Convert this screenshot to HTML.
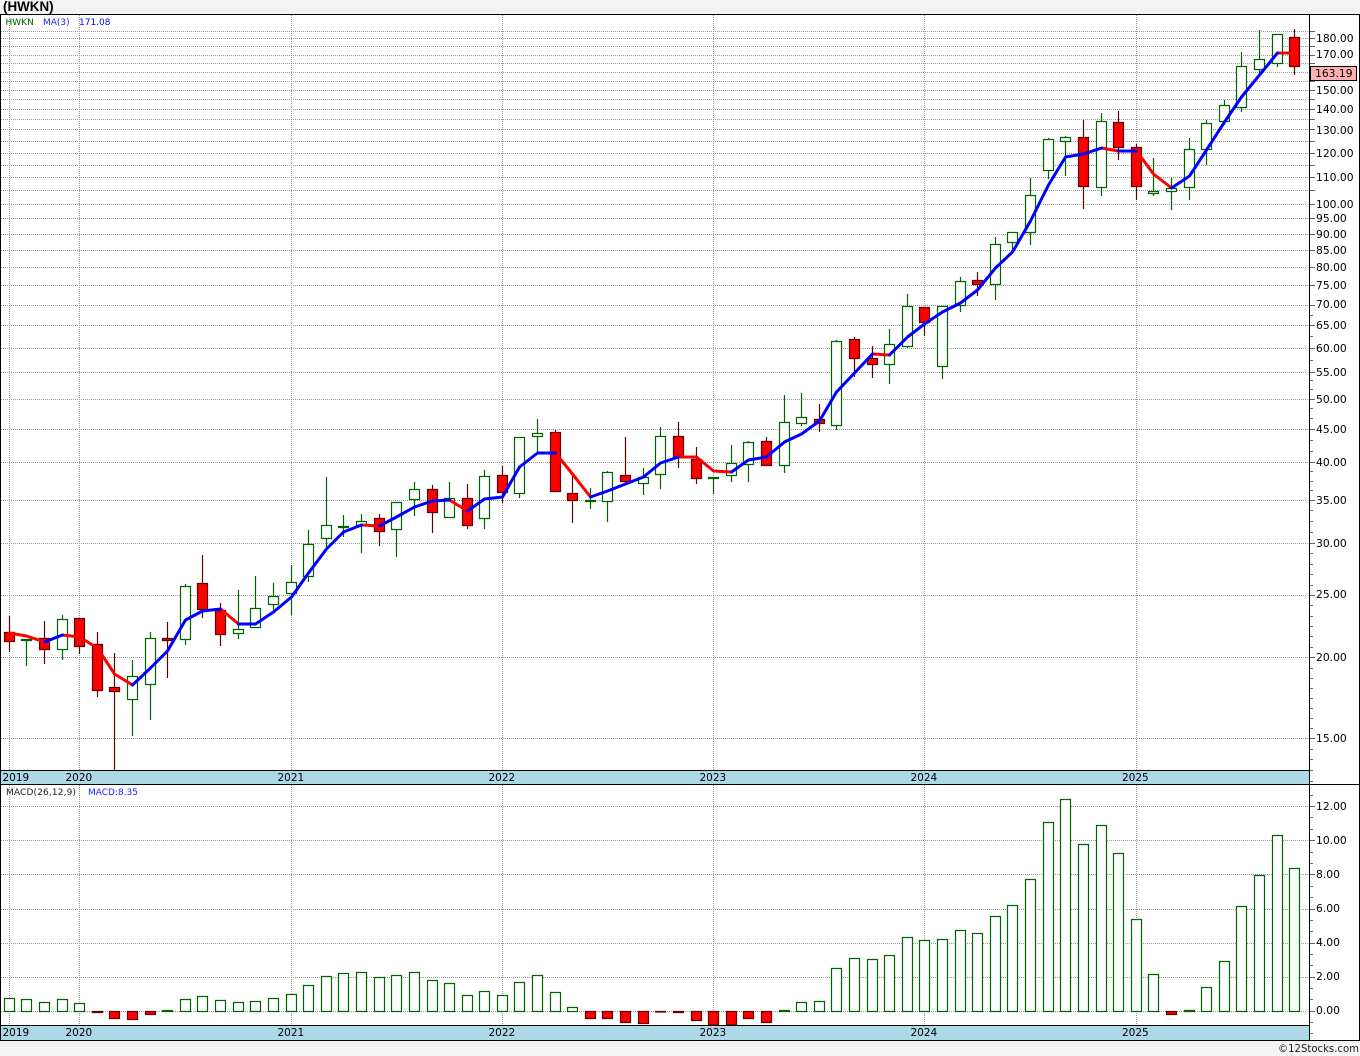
<!DOCTYPE html>
<html lang="en">
<head>
<meta charset="utf-8">
<title>HWKN</title>
<style>
html,body{margin:0;padding:0;background:#f3f3f3;width:1360px;height:1056px;overflow:hidden}
svg{display:block}
text{font-family:"DejaVu Sans","Liberation Sans",sans-serif;fill:#000}
.a{font-size:10.75px}
.t{font-size:10.5px}
.s{font-size:9px}
</style>
</head>
<body>
<svg xmlns="http://www.w3.org/2000/svg" width="1360" height="1056" viewBox="0 0 1360 1056">
<rect x="0" y="0" width="1360" height="1056" fill="#f3f3f3"/>
<rect x="0" y="14" width="1360" height="1027" fill="#fff"/>

<!-- grid -->
<g fill="none" stroke="#999" stroke-width="1" stroke-dasharray="1 1" shape-rendering="crispEdges">
<path d="M1 31.5H1309M1 38.5H1309M1 46.5H1309M1 55.5H1309M1 63.5H1309M1 72.5H1309M1 81.5H1309M1 90.5H1309M1 99.5H1309M1 109.5H1309M1 119.5H1309M1 129.5H1309M1 141.5H1309M1 153.5H1309M1 165.5H1309M1 177.5H1309M1 190.5H1309M1 204.5H1309M1 218.5H1309M1 234.5H1309M1 250.5H1309M1 267.5H1309M1 285.5H1309M1 305.5H1309M1 325.5H1309M1 348.5H1309M1 372.5H1309M1 399.5H1309M1 429.5H1309M1 462.5H1309M1 500.5H1309M1 543.5H1309M1 595.5H1309M1 657.5H1309M1 738.5H1309"/>
<path d="M1 806.5H1309M1 840.5H1309M1 874.5H1309M1 909.5H1309M1 943.5H1309M1 977.5H1309M1 1011.5H1309"/>
<path d="M9.5 15V770M79.5 15V770M291.5 15V770M502.5 15V770M713.5 15V770M924.5 15V770M1136.5 15V770"/>
<path d="M9.5 785V1025M79.5 785V1025M291.5 785V1025M502.5 785V1025M713.5 785V1025M924.5 785V1025M1136.5 785V1025"/>
</g>

<!-- green candles -->
<g fill="#fff" stroke="#006400" stroke-width="1.2">
<path d="M26.5 639V639.5M26.5 640.5V666M21.5 639.5h10V640.5h-10z"/>
<path d="M62.5 615V619.5M62.5 649.5V660M57.5 619.5h10V649.5h-10z"/>
<path d="M132.5 660V676.5M132.5 699.5V736M127.5 676.5h10V699.5h-10z"/>
<path d="M150.5 632V638.5M150.5 684.5V720M145.5 638.5h10V684.5h-10z"/>
<path d="M185.5 584V586.5M185.5 639.5V645M180.5 586.5h10V639.5h-10z"/>
<path d="M238.5 590V629.5M238.5 633.5V639M233.5 629.5h10V633.5h-10z"/>
<path d="M255.5 576V608.5M255.5 627.5V628M250.5 608.5h10V627.5h-10z"/>
<path d="M273.5 583V596.5M273.5 604.5V610M268.5 596.5h10V604.5h-10z"/>
<path d="M291.5 565V582.5M291.5 593.5V615M286.5 582.5h10V593.5h-10z"/>
<path d="M308.5 530V544.5M308.5 576.5V582M303.5 544.5h10V576.5h-10z"/>
<path d="M326.5 477V525.5M326.5 538.5V548M321.5 525.5h10V538.5h-10z"/>
<path d="M343.5 515V526.5M343.5 527.5V537M338.5 526.5h10V527.5h-10z"/>
<path d="M361.5 514V521.5M361.5 525.5V553M356.5 521.5h10V525.5h-10z"/>
<path d="M396.5 502V502.5M396.5 529.5V557M391.5 502.5h10V529.5h-10z"/>
<path d="M414.5 482V489.5M414.5 499.5V516M409.5 489.5h10V499.5h-10z"/>
<path d="M449.5 482V498.5M444.5 498.5h10V517.5h-10z"/>
<path d="M484.5 470V476.5M484.5 518.5V529M479.5 476.5h10V518.5h-10z"/>
<path d="M519.5 437V437.5M519.5 493.5V498M514.5 437.5h10V493.5h-10z"/>
<path d="M537.5 419V433.5M537.5 436.5V452M532.5 433.5h10V436.5h-10z"/>
<path d="M590.5 488V500.5M590.5 501.5V509M585.5 500.5h10V501.5h-10z"/>
<path d="M607.5 471V472.5M607.5 501.5V522M602.5 472.5h10V501.5h-10z"/>
<path d="M643.5 468V477.5M643.5 483.5V495M638.5 477.5h10V483.5h-10z"/>
<path d="M660.5 427V436.5M660.5 474.5V489M655.5 436.5h10V474.5h-10z"/>
<path d="M713.5 477V477.5M713.5 478.5V494M708.5 477.5h10V478.5h-10z"/>
<path d="M731.5 445V463.5M731.5 475.5V482M726.5 463.5h10V475.5h-10z"/>
<path d="M748.5 441V442.5M748.5 464.5V482M743.5 442.5h10V464.5h-10z"/>
<path d="M784.5 395V422.5M784.5 465.5V473M779.5 422.5h10V465.5h-10z"/>
<path d="M801.5 393V417.5M801.5 423.5V426M796.5 417.5h10V423.5h-10z"/>
<path d="M836.5 340V341.5M836.5 425.5V430M831.5 341.5h10V425.5h-10z"/>
<path d="M889.5 329V344.5M889.5 364.5V384M884.5 344.5h10V364.5h-10z"/>
<path d="M907.5 294V306.5M907.5 346.5V348M902.5 306.5h10V346.5h-10z"/>
<path d="M942.5 306V306.5M942.5 366.5V379M937.5 306.5h10V366.5h-10z"/>
<path d="M960.5 277V281.5M960.5 305.5V312M955.5 281.5h10V305.5h-10z"/>
<path d="M995.5 237V244.5M995.5 284.5V300M990.5 244.5h10V284.5h-10z"/>
<path d="M1012.5 232V232.5M1012.5 242.5V252M1007.5 232.5h10V242.5h-10z"/>
<path d="M1030.5 178V195.5M1030.5 232.5V245M1025.5 195.5h10V232.5h-10z"/>
<path d="M1048.5 138V139.5M1048.5 170.5V179M1043.5 139.5h10V170.5h-10z"/>
<path d="M1065.5 136V137.5M1065.5 141.5V176M1060.5 137.5h10V141.5h-10z"/>
<path d="M1101.5 113V121.5M1101.5 187.5V196M1096.5 121.5h10V187.5h-10z"/>
<path d="M1153.5 158V191.5M1153.5 193.5V196M1148.5 191.5h10V193.5h-10z"/>
<path d="M1171.5 178V188.5M1171.5 191.5V210M1166.5 188.5h10V191.5h-10z"/>
<path d="M1189.5 138V149.5M1189.5 187.5V200M1184.5 149.5h10V187.5h-10z"/>
<path d="M1206.5 120V123.5M1206.5 149.5V165M1201.5 123.5h10V149.5h-10z"/>
<path d="M1224.5 100V105.5M1224.5 121.5V125M1219.5 105.5h10V121.5h-10z"/>
<path d="M1241.5 52V66.5M1241.5 107.5V112M1236.5 66.5h10V107.5h-10z"/>
<path d="M1259.5 30V59.5M1259.5 69.5V75M1254.5 59.5h10V69.5h-10z"/>
<path d="M1277.5 34V34.5M1277.5 63.5V67M1272.5 34.5h10V63.5h-10z"/>
</g>

<!-- red candles -->
<g fill="#f00" stroke="#600000" stroke-width="1.2">
<path d="M9.5 616V632.5M9.5 641.5V652M4.5 632.5h10V641.5h-10z"/>
<path d="M44.5 621V638.5M44.5 649.5V664M39.5 638.5h10V649.5h-10z"/>
<path d="M79.5 618V618.5M79.5 646.5V654M74.5 618.5h10V646.5h-10z"/>
<path d="M97.5 632V644.5M97.5 690.5V697M92.5 644.5h10V690.5h-10z"/>
<path d="M114.5 653V687.5M114.5 691.5V770M109.5 687.5h10V691.5h-10z"/>
<path d="M167.5 622V638.5M167.5 640.5V678M162.5 638.5h10V640.5h-10z"/>
<path d="M202.5 555V583.5M202.5 609.5V618M197.5 583.5h10V609.5h-10z"/>
<path d="M220.5 603V610.5M220.5 634.5V646M215.5 610.5h10V634.5h-10z"/>
<path d="M379.5 514V518.5M379.5 531.5V546M374.5 518.5h10V531.5h-10z"/>
<path d="M432.5 485V489.5M432.5 512.5V533M427.5 489.5h10V512.5h-10z"/>
<path d="M467.5 484V498.5M467.5 525.5V529M462.5 498.5h10V525.5h-10z"/>
<path d="M502.5 466V475.5M502.5 492.5V503M497.5 475.5h10V492.5h-10z"/>
<path d="M555.5 430V432.5M555.5 491.5V492M550.5 432.5h10V491.5h-10z"/>
<path d="M572.5 474V493.5M572.5 500.5V523M567.5 493.5h10V500.5h-10z"/>
<path d="M625.5 437V475.5M625.5 481.5V483M620.5 475.5h10V481.5h-10z"/>
<path d="M678.5 422V436.5M678.5 457.5V468M673.5 436.5h10V457.5h-10z"/>
<path d="M696.5 447V459.5M696.5 478.5V484M691.5 459.5h10V478.5h-10z"/>
<path d="M766.5 437V441.5M766.5 465.5V466M761.5 441.5h10V465.5h-10z"/>
<path d="M819.5 404V419.5M819.5 423.5V432M814.5 419.5h10V423.5h-10z"/>
<path d="M854.5 337V339.5M854.5 358.5V377M849.5 339.5h10V358.5h-10z"/>
<path d="M872.5 346V358.5M872.5 364.5V378M867.5 358.5h10V364.5h-10z"/>
<path d="M924.5 307V307.5M924.5 322.5V336M919.5 307.5h10V322.5h-10z"/>
<path d="M977.5 272V280.5M977.5 284.5V296M972.5 280.5h10V284.5h-10z"/>
<path d="M1083.5 120V137.5M1083.5 186.5V209M1078.5 137.5h10V186.5h-10z"/>
<path d="M1118.5 111V122.5M1118.5 147.5V160M1113.5 122.5h10V147.5h-10z"/>
<path d="M1136.5 144V147.5M1136.5 186.5V200M1131.5 147.5h10V186.5h-10z"/>
<path d="M1294.5 29V37.5M1294.5 66.5V75M1289.5 37.5h10V66.5h-10z"/>
</g>

<!-- MA(3) line -->
<g fill="none" stroke-width="3" stroke-linejoin="round" stroke-linecap="round">
<g stroke="#f00">
<polyline points="9.5,633 26.5,636 44.5,642"/>
<polyline points="62.5,635 79.5,637 97.5,648 114.5,674 132.5,685"/>
<polyline points="220.5,609 238.5,624"/>
<polyline points="361.5,525 379.5,526"/>
<polyline points="449.5,500 467.5,511"/>
<polyline points="555.5,453 572.5,474 590.5,497"/>
<polyline points="678.5,457 696.5,457 713.5,471 731.5,472"/>
<polyline points="872.5,354 889.5,355"/>
<polyline points="1101.5,148 1118.5,151"/>
<polyline points="1136.5,151 1153.5,174 1171.5,188"/>
<polyline points="1277.5,53 1294.5,53"/>
</g>
<g stroke="#00f">
<polyline points="44.5,642 62.5,635"/>
<polyline points="132.5,685 150.5,668 167.5,651 185.5,620 202.5,611 220.5,609"/>
<polyline points="238.5,624 255.5,624 273.5,612 291.5,597 308.5,573 326.5,549 343.5,532 361.5,525"/>
<polyline points="379.5,526 396.5,517 414.5,507 432.5,501 449.5,500"/>
<polyline points="467.5,511 484.5,499 502.5,497 519.5,467 537.5,453 555.5,453"/>
<polyline points="590.5,497 607.5,491 625.5,484 643.5,477 660.5,463 678.5,457"/>
<polyline points="731.5,472 748.5,460 766.5,457 784.5,442 801.5,434 819.5,421 836.5,392 854.5,373 872.5,354"/>
<polyline points="889.5,355 907.5,337 924.5,324 942.5,312 960.5,303 977.5,290 995.5,268 1012.5,252 1030.5,221 1048.5,185 1065.5,157 1083.5,154 1101.5,148"/>
<polyline points="1118.5,151 1136.5,151"/>
<polyline points="1171.5,188 1189.5,176 1206.5,150 1224.5,122 1241.5,97 1259.5,75 1277.5,53"/>
</g>
</g>

<!-- MACD positive bars -->
<path fill="#fff" stroke="#006400" stroke-width="1.2" d="M4.5 998.5h10V1011.5h-10zM21.5 999.5h10V1011.5h-10zM39.5 1002.5h10V1011.5h-10zM57.5 999.5h10V1011.5h-10zM74.5 1003.5h10V1011.5h-10zM162.5 1010.5h10V1011.5h-10zM180.5 999.5h10V1011.5h-10zM197.5 996.5h10V1011.5h-10zM215.5 1000.5h10V1011.5h-10zM233.5 1002.5h10V1011.5h-10zM250.5 1001.5h10V1011.5h-10zM268.5 998.5h10V1011.5h-10zM286.5 994.5h10V1011.5h-10zM303.5 985.5h10V1011.5h-10zM321.5 976.5h10V1011.5h-10zM338.5 973.5h10V1011.5h-10zM356.5 972.5h10V1011.5h-10zM374.5 977.5h10V1011.5h-10zM391.5 975.5h10V1011.5h-10zM409.5 972.5h10V1011.5h-10zM427.5 980.5h10V1011.5h-10zM444.5 983.5h10V1011.5h-10zM462.5 995.5h10V1011.5h-10zM479.5 991.5h10V1011.5h-10zM497.5 995.5h10V1011.5h-10zM514.5 982.5h10V1011.5h-10zM532.5 975.5h10V1011.5h-10zM550.5 992.5h10V1011.5h-10zM567.5 1007.5h10V1011.5h-10zM779.5 1010.5h10V1011.5h-10zM796.5 1002.5h10V1011.5h-10zM814.5 1001.5h10V1011.5h-10zM831.5 968.5h10V1011.5h-10zM849.5 958.5h10V1011.5h-10zM867.5 959.5h10V1011.5h-10zM884.5 955.5h10V1011.5h-10zM902.5 937.5h10V1011.5h-10zM919.5 940.5h10V1011.5h-10zM937.5 939.5h10V1011.5h-10zM955.5 930.5h10V1011.5h-10zM972.5 933.5h10V1011.5h-10zM990.5 916.5h10V1011.5h-10zM1007.5 905.5h10V1011.5h-10zM1025.5 879.5h10V1011.5h-10zM1043.5 822.5h10V1011.5h-10zM1060.5 799.5h10V1011.5h-10zM1078.5 844.5h10V1011.5h-10zM1096.5 825.5h10V1011.5h-10zM1113.5 853.5h10V1011.5h-10zM1131.5 919.5h10V1011.5h-10zM1148.5 974.5h10V1011.5h-10zM1184.5 1010.5h10V1011.5h-10zM1201.5 987.5h10V1011.5h-10zM1219.5 961.5h10V1011.5h-10zM1236.5 906.5h10V1011.5h-10zM1254.5 875.5h10V1011.5h-10zM1272.5 835.5h10V1011.5h-10zM1289.5 868.5h10V1011.5h-10z"/>
<!-- MACD negative bars -->
<path fill="#f00" stroke="#600000" stroke-width="1.2" d="M92.5 1011.5h10V1012.5h-10zM109.5 1011.5h10V1018.5h-10zM127.5 1011.5h10V1019.5h-10zM145.5 1011.5h10V1014.5h-10zM585.5 1011.5h10V1018.5h-10zM602.5 1011.5h10V1018.5h-10zM620.5 1011.5h10V1022.5h-10zM638.5 1011.5h10V1023.5h-10zM655.5 1011.5h10V1012h-10zM673.5 1011.5h10V1012.5h-10zM691.5 1011.5h10V1020.5h-10zM708.5 1011.5h10V1025h-10zM726.5 1011.5h10V1025h-10zM743.5 1011.5h10V1018.5h-10zM761.5 1011.5h10V1022.5h-10zM1166.5 1011.5h10V1014.5h-10z"/>

<!-- time bars -->
<rect x="0" y="771" width="1309" height="13" fill="#add8e6"/>
<rect x="0" y="1026" width="1309" height="14" fill="#add8e6"/>

<!-- frame -->
<g fill="#000" shape-rendering="crispEdges">
<rect x="0" y="14" width="1360" height="1"/>
<rect x="0" y="14" width="1" height="1027"/>
<rect x="1359" y="14" width="1" height="1027"/>
<rect x="0" y="770" width="1310" height="1"/>
<rect x="0" y="784" width="1360" height="1"/>
<rect x="0" y="1025" width="1310" height="1"/>
<rect x="0" y="1040" width="1360" height="1"/>
<rect x="1309" y="14" width="1" height="1027"/>
</g>

<!-- axis ticks -->
<g fill="none" stroke="#666" stroke-width="1" shape-rendering="crispEdges">
<path d="M1310 31.5h5M1310 38.5h5M1310 46.5h5M1310 55.5h5M1310 63.5h5M1310 72.5h5M1310 81.5h5M1310 90.5h5M1310 99.5h5M1310 109.5h5M1310 119.5h5M1310 129.5h5M1310 141.5h5M1310 153.5h5M1310 165.5h5M1310 177.5h5M1310 190.5h5M1310 204.5h5M1310 218.5h5M1310 234.5h5M1310 250.5h5M1310 267.5h5M1310 285.5h5M1310 305.5h5M1310 325.5h5M1310 348.5h5M1310 372.5h5M1310 399.5h5M1310 429.5h5M1310 462.5h5M1310 500.5h5M1310 543.5h5M1310 595.5h5M1310 657.5h5M1310 738.5h5"/>
<path d="M1310 806.5h5M1310 840.5h5M1310 874.5h5M1310 909.5h5M1310 943.5h5M1310 977.5h5M1310 1011.5h5"/>
<path d="M1310 749.5h3M1310 759.5h3M1310 770.5h3M1310 781.5h3M1310 728.5h3M1310 718.5h3M1310 708.5h3M1310 698.5h3M1310 688.5h3M1310 678.5h3M1310 668.5h3M1310 647.5h3M1310 636.5h3M1310 626.5h3M1310 616.5h3M1310 605.5h3M1310 585.5h3M1310 574.5h3M1310 564.5h3M1310 553.5h3M1310 532.5h3M1310 521.5h3M1310 510.5h3M1310 490.5h3M1310 481.5h3M1310 471.5h3M1310 451.5h3M1310 440.5h3M1310 418.5h3M1310 408.5h3M1310 389.5h3M1310 380.5h3M1310 360.5h3M1310 336.5h3M1310 315.5h3"/>
<path d="M1310 795.5h3M1310 817.5h3M1310 829.5h3M1310 852.5h3M1310 863.5h3M1310 886.5h3M1310 897.5h3M1310 920.5h3M1310 931.5h3M1310 954.5h3M1310 965.5h3M1310 988.5h3M1310 999.5h3M1310 1022.5h3M1310 1033.5h3"/>
</g>

<!-- price label -->
<rect x="1310.5" y="66.5" width="46" height="14" fill="#ffb0b0" stroke="#000" shape-rendering="crispEdges"/>

<!-- axis text -->
<g class="a">
<text x="1316" y="42">180.00</text>
<text x="1316" y="58">170.00</text>
<text x="1315" y="77">163.19</text>
<text x="1316" y="94">150.00</text>
<text x="1316" y="113">140.00</text>
<text x="1316" y="134">130.00</text>
<text x="1316" y="157">120.00</text>
<text x="1316" y="181">110.00</text>
<text x="1316" y="208">100.00</text>
<text x="1316" y="222">95.00</text>
<text x="1316" y="238">90.00</text>
<text x="1316" y="254">85.00</text>
<text x="1316" y="271">80.00</text>
<text x="1316" y="289">75.00</text>
<text x="1316" y="308">70.00</text>
<text x="1316" y="329">65.00</text>
<text x="1316" y="352">60.00</text>
<text x="1316" y="376">55.00</text>
<text x="1316" y="403">50.00</text>
<text x="1316" y="433">45.00</text>
<text x="1316" y="466">40.00</text>
<text x="1316" y="504">35.00</text>
<text x="1316" y="547">30.00</text>
<text x="1316" y="598">25.00</text>
<text x="1316" y="661">20.00</text>
<text x="1316" y="742">15.00</text>
<text x="1316" y="810">12.00</text>
<text x="1316" y="844">10.00</text>
<text x="1316" y="878">8.00</text>
<text x="1316" y="912">6.00</text>
<text x="1316" y="946">4.00</text>
<text x="1316" y="980">2.00</text>
<text x="1316" y="1014">0.00</text>
</g>

<!-- time labels -->
<g class="t">
<text x="2.5" y="781">2019</text>
<text x="65.5" y="781">2020</text>
<text x="277.5" y="781">2021</text>
<text x="488.5" y="781">2022</text>
<text x="699.5" y="781">2023</text>
<text x="910.5" y="781">2024</text>
<text x="1122" y="781">2025</text>
<text x="2.5" y="1036">2019</text>
<text x="65.5" y="1036">2020</text>
<text x="277.5" y="1036">2021</text>
<text x="488.5" y="1036">2022</text>
<text x="699.5" y="1036">2023</text>
<text x="910.5" y="1036">2024</text>
<text x="1122" y="1036">2025</text>
</g>

<!-- labels -->
<text x="3" y="11" style="font-family:'Liberation Sans',sans-serif;font-size:13.4px;font-weight:bold;fill:#000">(HWKN)</text>
<text class="s" x="5.5" y="25" style="fill:#006400">HWKN</text>
<text class="s" x="43" y="25" style="fill:#2222ff">MA(3)</text>
<text class="s" x="79" y="25" style="fill:#0000ff">171.08</text>
<text class="s" x="6" y="795" textLength="70" style="fill:#222">MACD(26,12,9)</text>
<text class="s" x="88" y="795" textLength="50" style="fill:#2222ff">MACD:8.35</text>
<text x="1278" y="1052" textLength="81" lengthAdjust="spacingAndGlyphs" style="font-size:11px;fill:#222">©12Stocks.com</text>
</svg>
</body>
</html>
